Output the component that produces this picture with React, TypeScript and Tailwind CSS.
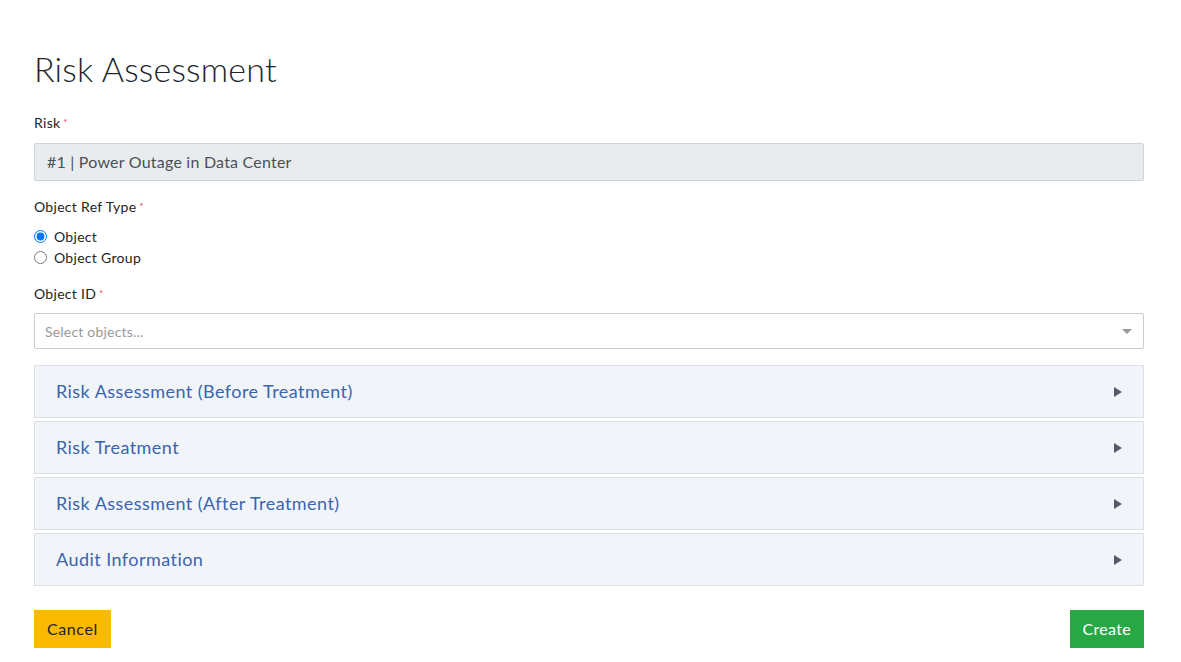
import React, { useState } from "react";

const sections = [
  "Risk Assessment (Before Treatment)",
  "Risk Treatment",
  "Risk Assessment (After Treatment)",
  "Audit Information",
];

function Label({ children }: { children: React.ReactNode }) {
  return (
    <label className="block text-[14px] leading-[21px] tracking-[0.3px] text-[#212529]">
      {children}
      <span className="ml-[3px] align-top text-[9px] text-[#dc3545]">*</span>
    </label>
  );
}

export default function App() {
  const [refType, setRefType] = useState("object");

  return (
    <div className="min-h-[662px] bg-white font-['Lato',sans-serif] text-[#212529]">
      <div className="ml-[34px] w-[1110px] pt-[48px]">
        {/* Title */}
        <h1 className="text-[34px] font-light leading-[42px] tracking-[0.2px]">
          Risk Assessment
        </h1>

        {/* Risk */}
        <div className="mt-[22px]">
          <Label>Risk</Label>
          <div className="mt-[10px] flex h-[38px] items-center rounded-[2px] border border-[#ced4da] bg-[#e9ecef] px-[12px] text-[16px] tracking-[0.22px] text-[#495057]">
            #1 | Power Outage in Data Center
          </div>
        </div>

        {/* Object Ref Type */}
        <div className="mt-[15px]">
          <Label>Object Ref Type</Label>
          <div className="mt-[9px] flex flex-col">
            <label className="flex h-[21px] items-center gap-[7px] text-[14px] tracking-[0.3px]">
              <input
                type="radio"
                name="ref"
                checked={refType === "object"}
                onChange={() => setRefType("object")}
                className="m-0 h-[13px] w-[13px] accent-[#0075ff]"
              />
              Object
            </label>
            <label className="flex h-[21px] items-center gap-[7px] text-[14px] tracking-[0.3px]">
              <input
                type="radio"
                name="ref"
                checked={refType === "group"}
                onChange={() => setRefType("group")}
                className="m-0 h-[13px] w-[13px] accent-[#0075ff]"
              />
              Object Group
            </label>
          </div>
        </div>

        {/* Object ID */}
        <div className="mt-[15px]">
          <Label>Object ID</Label>
          <div className="mt-[9px] flex h-[36px] items-center justify-between rounded-[2px] border border-[#cccccc] bg-white pl-[10px] pr-[11px]">
            <span className="text-[14px] tracking-[0.2px] text-[#999999]">Select objects...</span>
            <span className="h-0 w-0 border-x-[5px] border-t-[5px] border-x-transparent border-t-[#999999]" />
          </div>
        </div>

        {/* Accordion */}
        <div className="mt-[16px] flex flex-col gap-[3px]">
          {sections.map((s) => (
            <div
              key={s}
              className="flex h-[53px] items-center justify-between border border-[#dde1e6] bg-[#f1f4f9] pl-[21px] pr-[21px]"
            >
              <span className="text-[18px] tracking-[0.45px] text-[#3c64ad]">{s}</span>
              <span className="h-0 w-0 border-y-[5px] border-l-[8px] border-y-transparent border-l-[#555b66]" />
            </div>
          ))}
        </div>

        {/* Actions */}
        <div className="mt-[24px] flex justify-between">
          <button className="h-[38px] bg-[#fbb900] px-[13px] text-[16px] tracking-[0.6px] text-[#212529]">
            Cancel
          </button>
          <button className="h-[38px] bg-[#28a745] px-[13px] text-[16px] tracking-[0.3px] text-white">
            Create
          </button>
        </div>
      </div>
    </div>
  );
}
